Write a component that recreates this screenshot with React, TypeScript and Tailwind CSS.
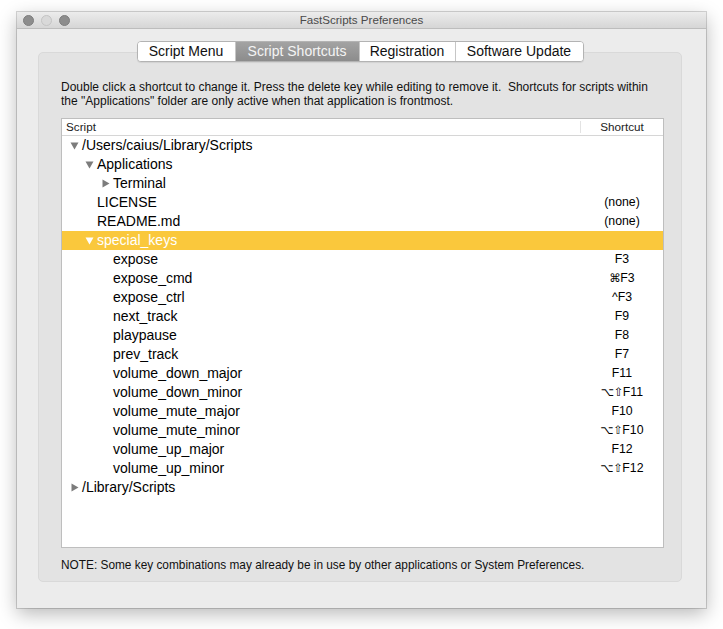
import React from "react";

type Row = {
  level: 0 | 1 | 2;
  label: string;
  tri?: "down" | "right";
  mod?: string;
  shortcut?: string;
  selected?: boolean;
};

const rows: Row[] = [
  { level: 0, label: "/Users/caius/Library/Scripts", tri: "down" },
  { level: 1, label: "Applications", tri: "down" },
  { level: 2, label: "Terminal", tri: "right" },
  { level: 1, label: "LICENSE", shortcut: "(none)" },
  { level: 1, label: "README.md", shortcut: "(none)" },
  { level: 1, label: "special_keys", tri: "down", selected: true },
  { level: 2, label: "expose", shortcut: "F3" },
  { level: 2, label: "expose_cmd", mod: "⌘", shortcut: "F3" },
  { level: 2, label: "expose_ctrl", shortcut: "^F3" },
  { level: 2, label: "next_track", shortcut: "F9" },
  { level: 2, label: "playpause", shortcut: "F8" },
  { level: 2, label: "prev_track", shortcut: "F7" },
  { level: 2, label: "volume_down_major", shortcut: "F11" },
  { level: 2, label: "volume_down_minor", mod: "⌥⇧", shortcut: "F11" },
  { level: 2, label: "volume_mute_major", shortcut: "F10" },
  { level: 2, label: "volume_mute_minor", mod: "⌥⇧", shortcut: "F10" },
  { level: 2, label: "volume_up_major", shortcut: "F12" },
  { level: 2, label: "volume_up_minor", mod: "⌥⇧", shortcut: "F12" },
  { level: 0, label: "/Library/Scripts", tri: "right" },
];

const levelPad: Record<number, string> = {
  0: "pl-[8px]",
  1: "pl-[23px]",
  2: "pl-[39px]",
};

function Tri({ dir, white }: { dir: "down" | "right"; white?: boolean }) {
  const fill = white ? "#ffffff" : "#7c7c7c";
  return (
    <svg width="12" height="12" viewBox="0 0 12 12" className="shrink-0">
      {dir === "down" ? (
        <polygon points="0.5,2.5 8.5,2.5 4.5,9.5" fill={fill} />
      ) : (
        <polygon points="1.5,1.5 8.5,5.5 1.5,9.5" fill={fill} />
      )}
    </svg>
  );
}

const tabs = [
  { label: "Script Menu", w: "w-[97px]" },
  { label: "Script Shortcuts", w: "w-[124px]", active: true },
  { label: "Registration", w: "w-[96px]" },
  { label: "Software Update", w: "w-[128px]" },
];

export default function App() {
  return (
    <div className="w-[723px] h-[629px] bg-white pt-[12px] pl-[17px] font-['Liberation_Sans',Arial,sans-serif] text-black overflow-hidden">
      <div className="w-[689px] h-[596px] bg-[#ececec] shadow-[0_6px_18px_rgba(0,0,0,0.28),0_0_0_1px_rgba(0,0,0,0.16)]">
        {/* title bar */}
        <div className="relative h-[17px] bg-gradient-to-b from-[#ececec] to-[#d6d6d6] border-b border-[#bdbdbd] flex items-center">
          <div className="flex items-center gap-[7px] pl-[6px]">
            <div className="w-[11px] h-[11px] rounded-full bg-[#8d8d8d] border border-[#7e7e7e]" />
            <div className="w-[11px] h-[11px] rounded-full bg-[#d9d9d9] border border-[#c4c4c4]" />
            <div className="w-[11px] h-[11px] rounded-full bg-[#8d8d8d] border border-[#7e7e7e]" />
          </div>
          <div className="absolute inset-0 flex items-center justify-center text-[11.6px] text-[#4a4a4a]">
            FastScripts Preferences
          </div>
        </div>

        {/* tabs */}
        <div className="relative z-10 ml-[21px] w-[644px] mt-[12px] flex justify-center">
          <div className="flex h-[21px] rounded-[4px] border border-[#b3b3b3] bg-white overflow-hidden shadow-[0_1px_1px_rgba(0,0,0,0.08)]">
            {tabs.map((t, i) => (
              <div
                key={t.label}
                className={`${t.w} flex items-center justify-center text-[14px] ${
                  i > 0 ? "border-l border-[#c6c6c6]" : ""
                } ${
                  t.active
                    ? "bg-gradient-to-b from-[#a3a3a3] to-[#8c8c8c] text-[#f4f4f4]"
                    : "bg-white text-[#111]"
                }`}
              >
                {t.label}
              </div>
            ))}
          </div>
        </div>

        {/* group box */}
        <div className="-mt-[10px] ml-[21px] w-[644px] h-[530px] rounded-[5px] bg-[#e3e3e3] border border-[#d9d9d9] pt-[27px] pl-[22px]">
          <p className="text-[12px] leading-[14px] text-[#111] whitespace-pre">
            {"Double click a shortcut to change it. Press the delete key while editing to remove it.  Shortcuts for scripts within\nthe \"Applications\" folder are only active when that application is frontmost."}
          </p>

          {/* table */}
          <div className="mt-[10px] w-[603px] h-[430px] bg-white border border-[#bebebe]">
            <div className="flex h-[17px] border-b border-[#d6d6d6] text-[11.7px] text-[#222]">
              <div className="w-[519px] pl-[4px] flex items-center border-r border-[#e3e3e3] my-[2px]">
                Script
              </div>
              <div className="flex-1 flex items-center justify-center">Shortcut</div>
            </div>
            <div>
              {rows.map((r) => (
                <div
                  key={r.label}
                  className={`flex h-[19px] items-center ${
                    r.selected ? "bg-[#fac83c] text-white" : ""
                  }`}
                >
                  <div
                    className={`w-[519px] flex items-center text-[14px] ${levelPad[r.level]}`}
                  >
                    <div className="w-[12px] flex items-center">
                      {r.tri ? <Tri dir={r.tri} white={r.selected} /> : null}
                    </div>
                    <span>{r.label}</span>
                  </div>
                  <div className="flex-1 text-center text-[12.3px]">
                    {r.mod ? (
                      <span className="font-['DejaVu_Sans',sans-serif] text-[11.5px] tracking-[-0.5px]">
                        {r.mod}
                      </span>
                    ) : null}
                    {r.shortcut ?? ""}
                  </div>
                </div>
              ))}
            </div>
          </div>

          <p className="mt-[10px] text-[11.85px] leading-[14px] text-[#111]">
            NOTE: Some key combinations may already be in use by other applications or System Preferences.
          </p>
        </div>
      </div>
    </div>
  );
}
